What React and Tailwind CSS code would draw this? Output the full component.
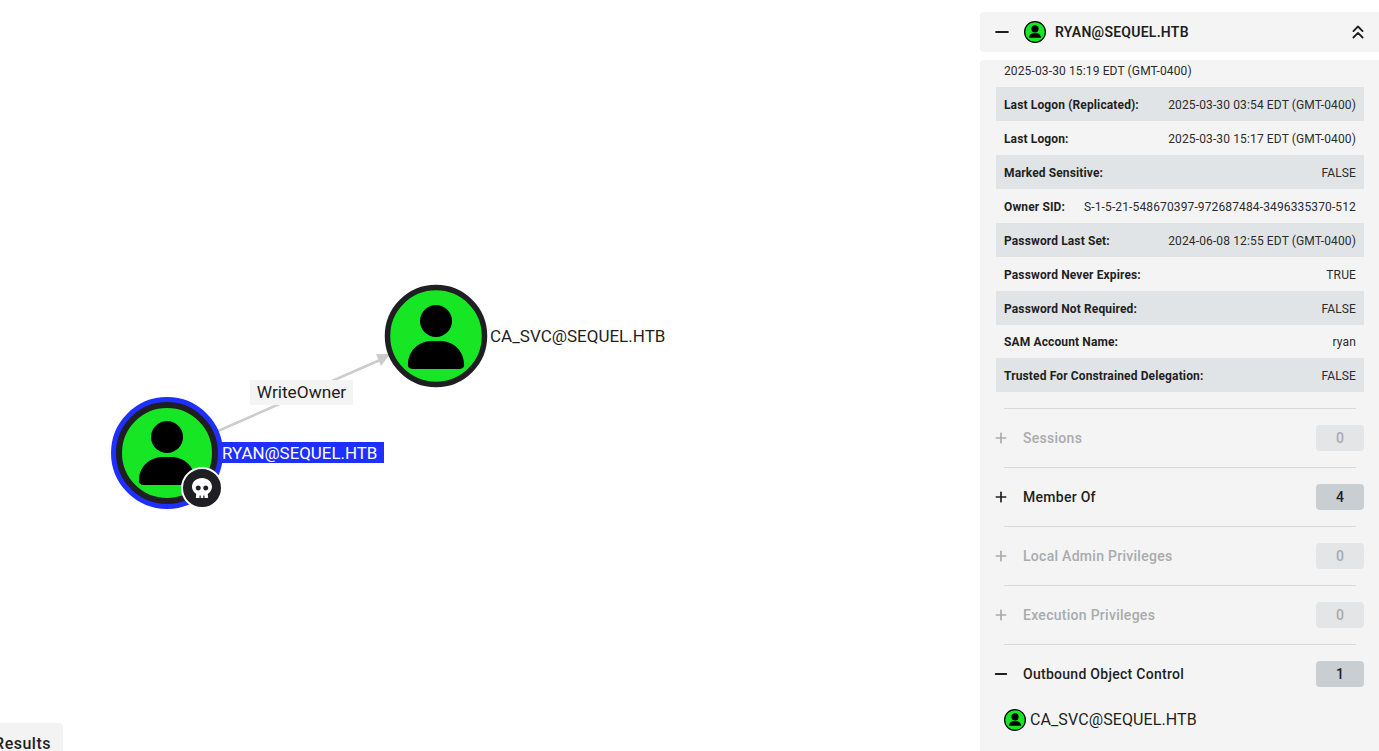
import { ChevronsUp, Minus, Plus } from "lucide-react";
import { FaSkull } from "react-icons/fa";

const rows = [
  ["", "2025-03-30 15:19 EDT (GMT-0400)"],
  ["Last Logon (Replicated):", "2025-03-30 03:54 EDT (GMT-0400)"],
  ["Last Logon:", "2025-03-30 15:17 EDT (GMT-0400)"],
  ["Marked Sensitive:", "FALSE"],
  ["Owner SID:", "S-1-5-21-548670397-972687484-3496335370-512"],
  ["Password Last Set:", "2024-06-08 12:55 EDT (GMT-0400)"],
  ["Password Never Expires:", "TRUE"],
  ["Password Not Required:", "FALSE"],
  ["SAM Account Name:", "ryan"],
  ["Trusted For Constrained Delegation:", "FALSE"],
];

const sections = [
  { name: "Sessions", count: 0 },
  { name: "Member Of", count: 4, active: true },
  { name: "Local Admin Privileges", count: 0 },
  { name: "Execution Privileges", count: 0 },
];

function UserGlyph({ cx, cy }) {
  return (
    <g fill="#000">
      <circle cx={cx} cy={cy - 15} r="16" />
      <path
        d={`M${cx - 28} ${cy + 28} Q${cx - 29} ${cy + 32} ${cx - 24} ${cy + 33} L${cx + 24} ${cy + 33} Q${cx + 29} ${cy + 32} ${cx + 28} ${cy + 28} C${cx + 28} ${cy + 14} ${cx + 16} ${cy + 5} ${cx + 5} ${cy + 5} L${cx - 5} ${cy + 5} C${cx - 16} ${cy + 5} ${cx - 28} ${cy + 14} ${cx - 28} ${cy + 28} Z`}
      />
    </g>
  );
}

function Graph() {
  return (
    <svg className="absolute left-0 top-0" width="980" height="751">
      <line x1="218" y1="431" x2="380" y2="360" stroke="#cccccc" strokeWidth="2.5" />
      <polygon points="390,354 376,354 381,366" fill="#cccccc" />
      <circle cx="436" cy="336" r="48.5" fill="#17e625" stroke="#1f1e23" strokeWidth="5.5" />
      <UserGlyph cx={436} cy={336} />
      <circle cx="167" cy="453" r="53.5" fill="#1f2fff" stroke="#1f2fff" strokeWidth="5" />
      <circle cx="167" cy="453" r="48" fill="#17e625" stroke="#1f1e23" strokeWidth="6" />
      <UserGlyph cx={167} cy={452} />
    </svg>
  );
}

function SmallUser({ className }) {
  return (
    <svg className={className} viewBox="0 0 22 22">
      <circle cx="11" cy="11" r="10.4" fill="#17e625" stroke="#000" strokeWidth="1.2" />
      <circle cx="11" cy="7.8" r="3.6" fill="#000" />
      <path d="M5 16.8 C5 13.6 7.6 12.2 9.6 12.2 L12.4 12.2 C14.4 12.2 17 13.6 17 16.8 Z" fill="#000" />
    </svg>
  );
}

function Section({ name, count, active }) {
  return (
    <div className="mx-2 flex h-[59px] items-center border-t border-[#d9dadb]">
      <div className={`-ml-2 flex w-[368px] shrink-0 items-center ${active ? "text-[#1f1f21]" : "text-[#a9abad]"}`}>
        <Plus className="-ml-[3px] h-4 w-4 shrink-0" strokeWidth={2.5} />
        <span className="ml-[14px] text-sm font-medium tracking-[0.28px]">{name}</span>
        <span
          className={`ml-auto flex h-[26px] w-12 items-center justify-center rounded text-sm font-medium ${
            active ? "bg-[#c9ced2]" : "bg-[#e4e5e6]"
          }`}
        >
          {count}
        </span>
      </div>
    </div>
  );
}

export default function App() {
  return (
    <div className="flex h-[751px] w-[1379px] overflow-hidden bg-white font-['Roboto',sans-serif] text-[#1f1f21]">
      <div className="relative h-full w-[980px] shrink-0">
        <Graph />
        <div className="absolute left-[490px] top-[325px] text-[17px] leading-[22px] whitespace-nowrap">
          CA_SVC@SEQUEL.HTB
        </div>
        <div className="absolute left-[250px] top-[380px] flex h-[25px] w-[103px] items-center justify-center bg-[#f4f4f4] pt-[1px] text-[17.3px] whitespace-nowrap">
          WriteOwner
        </div>
        <div className="absolute left-[220px] top-[442px] flex h-[21px] w-[164px] items-center bg-[#1f2fff] pl-[2px] pt-[3px] text-[16.9px] whitespace-nowrap text-white">
          RYAN@SEQUEL.HTB
        </div>
        <div className="absolute left-[181px] top-[467px] flex h-[42px] w-[42px] items-center justify-center rounded-full border-2 border-white bg-[#1f1e23] text-white">
          <FaSkull className="h-5 w-5" />
        </div>
        <div className="absolute bottom-0 left-0 flex h-7 w-[63px] justify-end overflow-hidden rounded-tr bg-[#f3f3f3] pr-3 pt-[11px] text-base leading-[20px] font-medium tracking-[0.5px]">
          Results
        </div>
      </div>

      <div className="flex h-full w-[399px] shrink-0 flex-col gap-2 pt-3">
        <div className="flex h-10 shrink-0 items-center rounded-l bg-[#f4f4f4] pl-3 pr-[10px]">
          <Minus className="h-5 w-5" strokeWidth={2.5} />
          <SmallUser className="ml-3 h-[22px] w-[22px]" />
          <span className="ml-[9px] text-sm font-semibold tracking-[0.25px]">RYAN@SEQUEL.HTB</span>
          <ChevronsUp className="ml-auto h-[22px] w-[22px]" strokeWidth={2} />
        </div>

        <div className="min-h-0 flex-1 overflow-hidden rounded-tl bg-[#f4f4f4] pl-4 pr-[15px]">
          <div className="-mt-[7px]">
            {rows.map(([label, value], i) => (
              <div
                key={value + i}
                className={`flex items-center px-2 pt-[1px] text-xs tracking-[0.13px] ${
                  i === 8 ? "h-[33px]" : "h-[34px]"
                } ${i % 2 === 1 ? "bg-[#e1e4e7]" : ""} ${label ? "justify-between" : "justify-start"}`}
              >
                {label && <span className="font-bold">{label}</span>}
                <span className="text-[#2b2b2d]">{value}</span>
              </div>
            ))}
          </div>
          <div className="h-4" />
          {sections.map((s) => (
            <Section key={s.name} {...s} />
          ))}
          <div className="mx-2 flex h-[59px] items-center border-t border-[#d9dadb]">
            <div className="-ml-2 flex w-[368px] shrink-0 items-center">
              <Minus className="-ml-1 h-[18px] w-[18px] shrink-0" strokeWidth={2.5} />
              <span className="ml-[13px] text-sm font-medium tracking-[0.28px]">Outbound Object Control</span>
              <span className="ml-auto flex h-[26px] w-12 items-center justify-center rounded bg-[#c9ced2] text-sm font-medium">
                1
              </span>
            </div>
          </div>
          <div className="ml-2 flex items-center gap-1 pt-[5px]">
            <SmallUser className="h-[22px] w-[22px]" />
            <span className="text-base tracking-[0.1px]">CA_SVC@SEQUEL.HTB</span>
          </div>
        </div>
      </div>
    </div>
  );
}
